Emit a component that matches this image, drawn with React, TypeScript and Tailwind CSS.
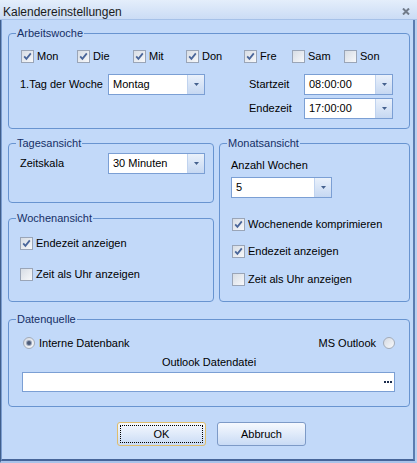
import React from 'react'

function CheckBox({ checked }: { checked?: boolean }) {
  return (
    <span className="flex h-[13px] w-[13px] shrink-0 items-center justify-center border border-[#9aa5b7] bg-linear-to-br from-[#d7dde5] to-[#f7f8fa]">
      {checked && (
        <svg width="9" height="9" viewBox="0 0 9 9">
          <path d="M1.2 4.4 L3.4 6.8 L7.8 1.4" fill="none" stroke="#4a669a" strokeWidth="1.8" />
        </svg>
      )}
    </span>
  )
}

function Check({ label, checked, className = '' }: { label: string; checked?: boolean; className?: string }) {
  return (
    <label className={`flex h-[13px] items-center ${className}`}>
      <CheckBox checked={checked} />
      <span className="ml-[3px] whitespace-nowrap leading-[13px]">{label}</span>
    </label>
  )
}

function Radio({ checked }: { checked?: boolean }) {
  return (
    <span className="flex h-[12px] w-[12px] shrink-0 items-center justify-center rounded-full border border-[#a3abb8] bg-linear-to-br from-[#d5dae2] to-[#f8f9fb]">
      {checked && <span className="h-[4px] w-[4px] rounded-full bg-[#4b5b78] ring-1 ring-[#9aa6bb]" />}
    </span>
  )
}

function Combo({ value, className }: { value: string; className: string }) {
  return (
    <div className={`flex h-[21px] shrink-0 border border-[#7b9fd4] bg-white ${className}`}>
      <span className="flex-1 pl-[4px] leading-[19px] text-black">{value}</span>
      <span className="flex w-[17px] items-center justify-center border-l border-[#c0d3ef] bg-linear-to-b from-[#eaf1fb] to-[#c6d8f2]">
        <svg width="5" height="3" viewBox="0 0 5 3">
          <polygon points="0,0 5,0 2.5,3" fill="#45618e" />
        </svg>
      </span>
    </div>
  )
}

function Group({ title, className, children }: { title: string; className: string; children: React.ReactNode }) {
  return (
    <fieldset className={`min-w-0 shrink-0 rounded-[4px] border border-[#6894d0] ${className}`}>
      <legend className="ml-[7px] px-[1px] leading-[13px] text-[#152f66]">{title}</legend>
      {children}
    </fieldset>
  )
}

export default function App() {
  return (
    <div className="flex h-[463px] w-[417px] flex-col font-['Liberation_Sans',Arial,sans-serif] text-[11px] text-black">
      {/* Title bar */}
      <div className="flex h-[20px] shrink-0 items-start border-b border-[#a6c1e8] bg-linear-to-b from-[#e4eefb] to-[#cbdcf5]">
        <span className="pl-[3px] pt-[6px] text-[12px] leading-[13px] text-[#1b1b1b]">Kalendereinstellungen</span>
        <span className="ml-auto mr-[7px] mt-[8px]">
          <svg width="8" height="7" viewBox="0 0 8 7">
            <path d="M1 0.5 L7 6.5 M7 0.5 L1 6.5" stroke="#717b8a" strokeWidth="2" />
          </svg>
        </span>
      </div>

      {/* Body */}
      <div className="flex flex-1 flex-col border-b-[2px] border-l border-r-[2px] border-b-[#a9c3ea] border-l-[#3f5e8c] border-r-[#b9d0f0]">
        <div className="flex flex-1 flex-col border-b-[2px] border-l border-r-[2px] border-b-[#46659a] border-l-[#7b9dd0] border-r-[#5c7cb0] bg-[#c2d9f9] px-[6px]">
          {/* Arbeitswoche */}
          <Group title="Arbeitswoche" className="mt-[7px] h-[102px] w-[402px]">
            <div className="flex pl-[12px] pt-[10px]">
              <Check label="Mon" checked className="w-[56px]" />
              <Check label="Die" checked className="w-[56px]" />
              <Check label="Mit" checked className="w-[53px]" />
              <Check label="Don" checked className="w-[58px]" />
              <Check label="Fre" checked className="w-[48px]" />
              <Check label="Sam" className="w-[52px]" />
              <Check label="Son" />
            </div>
            <div className="mt-[11px] flex items-start">
              <div className="flex items-center">
                <span className="w-[99px] pl-[11px]">1.Tag der Woche</span>
                <Combo value="Montag" className="w-[97px]" />
              </div>
              <div className="ml-[44px] flex flex-col gap-[3px]">
                <div className="flex items-center">
                  <span className="w-[55px]">Startzeit</span>
                  <Combo value="08:00:00" className="w-[89px]" />
                </div>
                <div className="flex items-center">
                  <span className="w-[55px]">Endezeit</span>
                  <Combo value="17:00:00" className="w-[89px]" />
                </div>
              </div>
            </div>
          </Group>

          <div className="mt-[8px] flex gap-[5px]">
            <div className="flex w-[206px] flex-col">
              {/* Tagesansicht */}
              <Group title="Tagesansicht" className="h-[66px] w-[206px]">
                <div className="flex items-center pt-[3px]">
                  <span className="w-[99px] pl-[11px]">Zeitskala</span>
                  <Combo value="30 Minuten" className="w-[97px]" />
                </div>
              </Group>

              {/* Wochenansicht */}
              <Group title="Wochenansicht" className="mt-[9px] h-[90px] w-[206px]">
                <div className="flex flex-col gap-[18px] pl-[11px] pt-[12px]">
                  <Check label="Endezeit anzeigen" checked />
                  <Check label="Zeit als Uhr anzeigen" />
                </div>
              </Group>
            </div>

            {/* Monatsansicht */}
            <Group title="Monatsansicht" className="h-[165px] w-[191px]">
              <div className="flex flex-col pl-[11px] pt-[9px]">
                <span className="leading-[13px]">Anzahl Wochen</span>
                <Combo value="5" className="mt-[5px] w-[101px]" />
                <div className="mt-[20px] flex flex-col pl-[1px]">
                  <Check label="Wochenende komprimieren" checked />
                  <Check label="Endezeit anzeigen" checked className="mt-[14px]" />
                  <Check label="Zeit als Uhr anzeigen" className="mt-[15px]" />
                </div>
              </div>
            </Group>
          </div>

          {/* Datenquelle */}
          <Group title="Datenquelle" className="mt-[11px] h-[94px] w-[402px]">
            <div className="flex items-center justify-between px-[14px] pt-[11px]">
              <label className="flex items-center">
                <Radio checked />
                <span className="ml-[4px] leading-[12px]">Interne Datenbank</span>
              </label>
              <label className="flex items-center">
                <span className="mr-[7px] leading-[12px]">MS Outlook</span>
                <Radio />
              </label>
            </div>
            <div className="mt-[7px] text-center leading-[13px]">Outlook Datendatei</div>
            <div className="ml-[13px] mt-[3px] flex h-[20px] w-[373px] items-center justify-end border border-[#7b9fd4] bg-white pr-[2px]">
              <span className="mb-[1px] flex gap-[1px]">
                <span className="h-[2px] w-[2px] bg-[#1c2c4c]" />
                <span className="h-[2px] w-[2px] bg-[#1c2c4c]" />
                <span className="h-[2px] w-[2px] bg-[#1c2c4c]" />
              </span>
            </div>
          </Group>

          {/* Buttons */}
          <div className="ml-[109px] mt-[15px] flex gap-[11px]">
            <button className="flex h-[24px] w-[89px] items-center justify-center rounded-[3px] border border-[#dfbd6c] bg-linear-to-b from-[#f6f9fe] to-[#c9dbf5] p-[2px]">
              <span className="flex h-full w-full items-center justify-center border border-dotted border-black leading-[13px]">OK</span>
            </button>
            <button className="flex h-[24px] w-[89px] items-center justify-center rounded-[3px] border border-[#7d9ac7] bg-linear-to-b from-[#f6f9fe] to-[#c9dbf5] leading-[13px]">
              Abbruch
            </button>
          </div>
        </div>
      </div>
    </div>
  )
}
